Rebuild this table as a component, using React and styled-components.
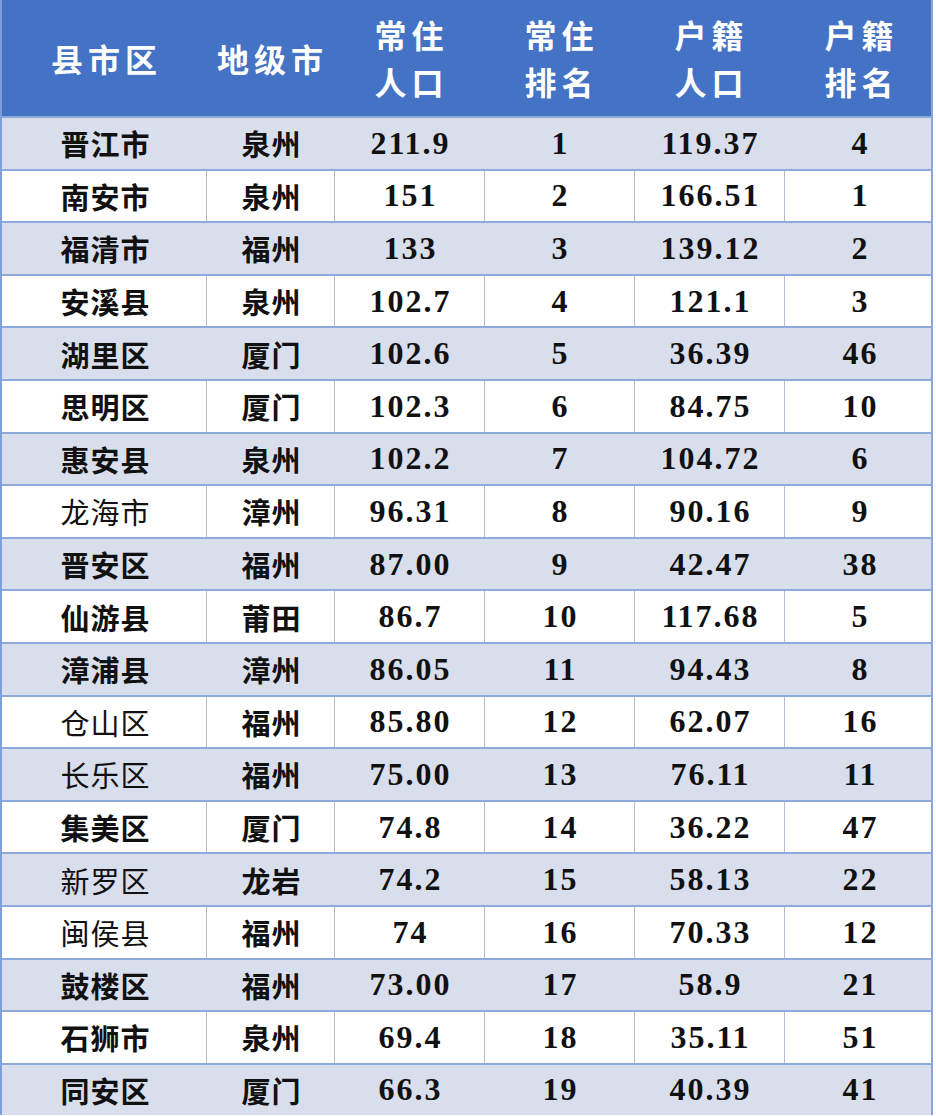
import styled, { createGlobalStyle } from 'styled-components';

const GlobalStyle = createGlobalStyle`
  html, body {
    margin: 0;
    padding: 0;
    background: #ffffff;
  }
`;

const COLS = '204px 128px 150px 150px 150px 150px';

const Table = styled.div`
  width: 933px;
  border-left: 2px solid #7e9fd8;
  border-right: 2px solid #8aa5d8;
  box-sizing: border-box;
`;

const HeadRow = styled.div`
  display: grid;
  grid-template-columns: ${COLS};
  height: 116px;
  background: #4472c4;
`;

const HeadCell = styled.div`
  display: flex;
  flex-direction: column;
  align-items: center;
  justify-content: center;
  color: #ffffff;
  font-family: "Noto Sans CJK SC", "Noto Sans", sans-serif;
  font-weight: 700;
  font-size: 32px;
  line-height: 47px;
  letter-spacing: 5px;
  padding-left: 5px; /* balance letter-spacing */
`;

const Row = styled.div`
  display: grid;
  grid-template-columns: ${COLS};
  height: 52.6px;
  box-sizing: border-box;
  border-top: 2px solid #8eaadb;
  background: ${(p) => (p.$shaded ? '#d9deed' : '#ffffff')};
`;

const Cell = styled.div`
  display: flex;
  align-items: center;
  justify-content: center;
  color: #111111;
  border-left: 1px solid ${(p) => (p.$shaded || p.$first ? 'transparent' : '#b3bdcf')};
`;

const Name = styled.span`
  font-family: "Noto Sans CJK SC", sans-serif;
  font-weight: ${(p) => (p.$light ? 400 : 700)};
  font-size: 29px;
  letter-spacing: 1px;
  padding-left: 2px;
`;

const Num = styled.span`
  font-family: "Liberation Serif", "Times New Roman", serif;
  font-weight: 700;
  font-size: 32px;
  letter-spacing: 2px;
  padding-left: 2px;
`;

const rows = [
  ['晋江市', '泉州', '211.9', '1', '119.37', '4'],
  ['南安市', '泉州', '151', '2', '166.51', '1'],
  ['福清市', '福州', '133', '3', '139.12', '2'],
  ['安溪县', '泉州', '102.7', '4', '121.1', '3'],
  ['湖里区', '厦门', '102.6', '5', '36.39', '46'],
  ['思明区', '厦门', '102.3', '6', '84.75', '10'],
  ['惠安县', '泉州', '102.2', '7', '104.72', '6'],
  ['龙海市', '漳州', '96.31', '8', '90.16', '9', true],
  ['晋安区', '福州', '87.00', '9', '42.47', '38'],
  ['仙游县', '莆田', '86.7', '10', '117.68', '5'],
  ['漳浦县', '漳州', '86.05', '11', '94.43', '8'],
  ['仓山区', '福州', '85.80', '12', '62.07', '16', true],
  ['长乐区', '福州', '75.00', '13', '76.11', '11', true],
  ['集美区', '厦门', '74.8', '14', '36.22', '47'],
  ['新罗区', '龙岩', '74.2', '15', '58.13', '22', true],
  ['闽侯县', '福州', '74', '16', '70.33', '12', true],
  ['鼓楼区', '福州', '73.00', '17', '58.9', '21'],
  ['石狮市', '泉州', '69.4', '18', '35.11', '51'],
  ['同安区', '厦门', '66.3', '19', '40.39', '41'],
];

const headers = [['县市区'], ['地级市'], ['常住', '人口'], ['常住', '排名'], ['户籍', '人口'], ['户籍', '排名']];

export default function App() {
  return (
    <>
      <GlobalStyle />
      <Table>
        <HeadRow>
          {headers.map((h, i) => (
            <HeadCell key={i}>
              {h.map((line) => (
                <span key={line}>{line}</span>
              ))}
            </HeadCell>
          ))}
        </HeadRow>
        {rows.map((r, i) => {
          const shaded = i % 2 === 0;
          return (
            <Row key={r[0]} $shaded={shaded}>
              <Cell $shaded={shaded} $first>
                <Name $light={r[6]}>{r[0]}</Name>
              </Cell>
              <Cell $shaded={shaded}>
                <Name>{r[1]}</Name>
              </Cell>
              {r.slice(2, 6).map((v, j) => (
                <Cell key={j} $shaded={shaded}>
                  <Num>{v}</Num>
                </Cell>
              ))}
            </Row>
          );
        })}
      </Table>
    </>
  );
}
